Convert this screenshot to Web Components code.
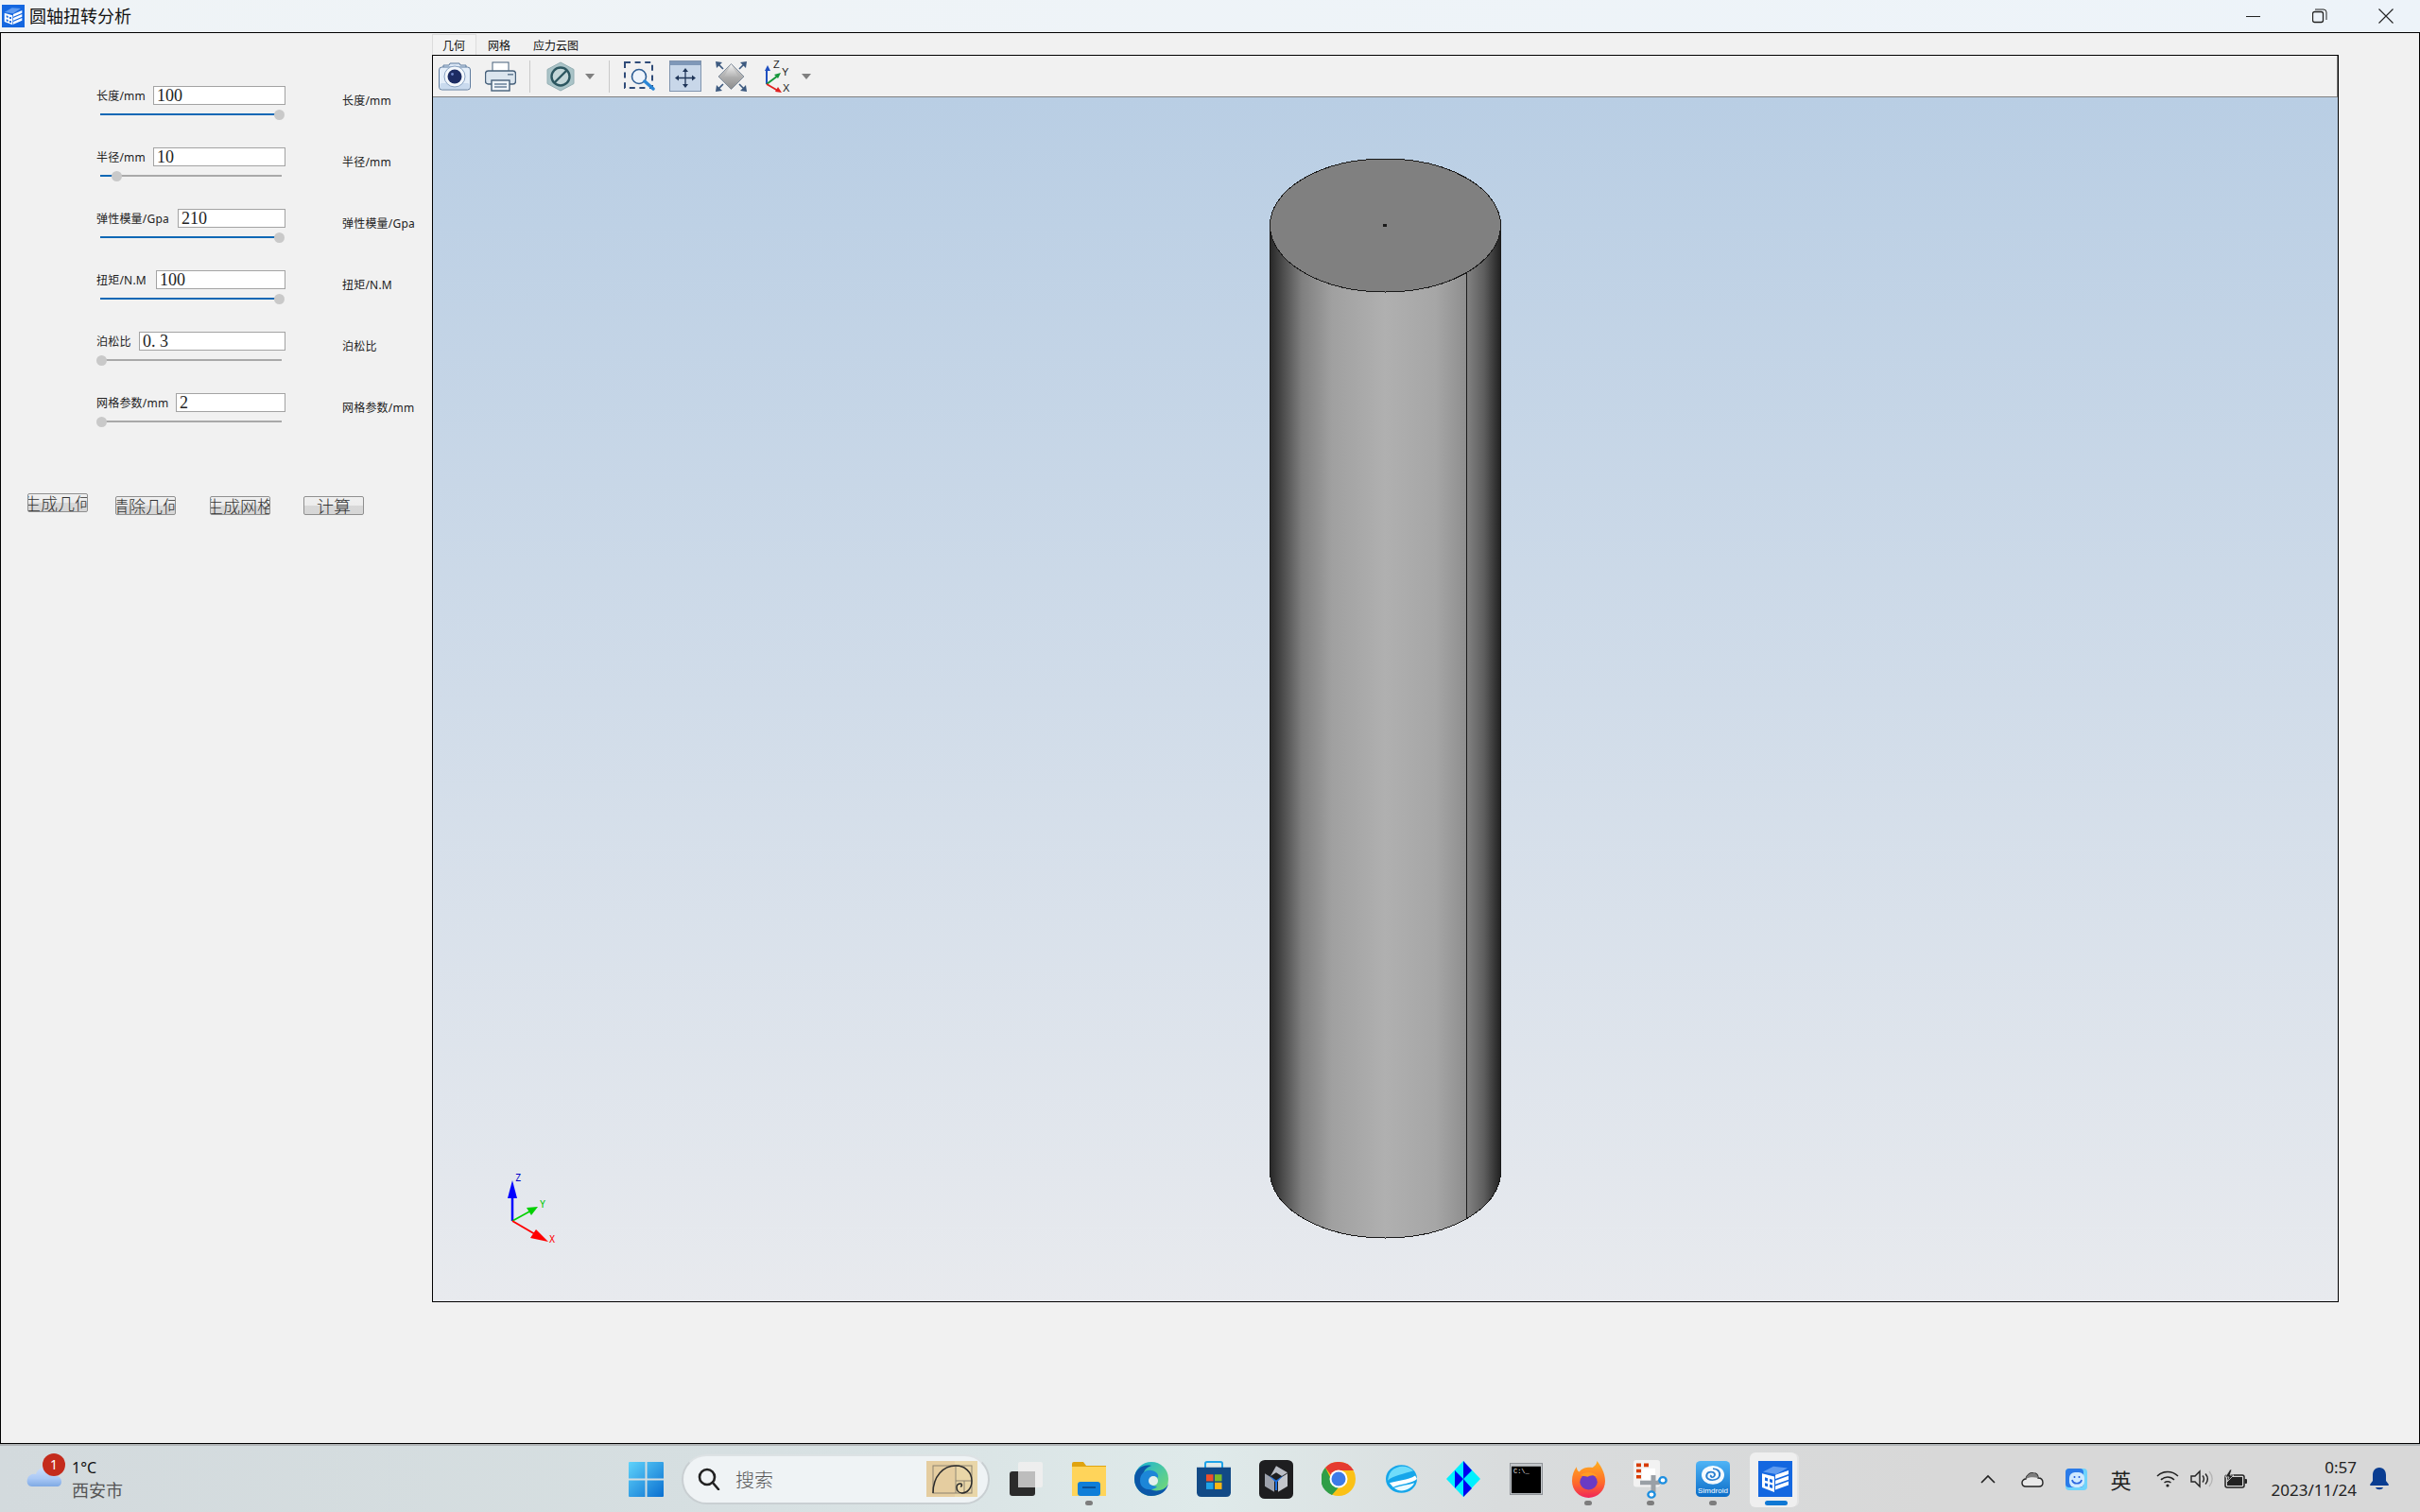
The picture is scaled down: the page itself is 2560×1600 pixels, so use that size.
<!DOCTYPE html>
<html lang="zh">
<head>
<meta charset="utf-8">
<title>圆轴扭转分析</title>
<style>
html,body { margin:0; padding:0; width:2560px; height:1600px; overflow:hidden; }
body { display:flex; flex-direction:column; font-family:"Noto Sans","Noto Sans CJK SC",sans-serif; color:#000; }
svg { display:block; }
</style>
</head>
<body>

<title-bar caption="圆轴扭转分析">
	<svg slot="icon" width="24" height="24" viewBox="0 0 36 36">
		<rect width="36" height="36" fill="#1467e0"/>
		<path d="M4 12 L16 5 L30 6 L18 14 Z" fill="#5f9bf0"/>
		<path d="M4 13 L17 17 L17 32 L4 27 Z" fill="#fff"/>
		<path d="M7 17 L10 18 L10 21 L7 20 Z M12 19 L15 20 L15 23 L12 22 Z M7 23 L10 24 L10 27 L7 26 Z M12 25 L15 26 L15 29 L12 28 Z" fill="#1467e0"/>
		<path d="M18 15 L32 9 L32 13 L18 19 Z M18 21 L32 15 L32 19 L18 25 Z M18 27 L32 21 L32 25 L18 31 Z" fill="#fff"/>
	</svg>
</title-bar>

<main-window>
	<param-form>
		<param-row label="长度/mm" value="100" offset="60" pos="1"></param-row>
		<param-row label="半径/mm" value="10" offset="60" pos="0.09"></param-row>
		<param-row label="弹性模量/Gpa" value="210" offset="86" pos="1"></param-row>
		<param-row label="扭矩/N.M" value="100" offset="63" pos="1"></param-row>
		<param-row label="泊松比" value="0. 3" offset="45" pos="0"></param-row>
		<param-row label="网格参数/mm" value="2" offset="84" pos="0"></param-row>
		<button-row>
			<sim-button>生成几何</sim-button>
			<sim-button lowered>清除几何</sim-button>
			<sim-button lowered>生成网格</sim-button>
			<sim-button lowered>计算</sim-button>
		</button-row>
	</param-form>

	<viewer-panel>
		<tab-strip slot="tabs">
			<tab-item selected>几何</tab-item>
			<tab-item>网格</tab-item>
			<tab-item>应力云图</tab-item>
		</tab-strip>
		<tool-strip slot="tools">
			<tool-button style="margin-left:6px">
				<svg width="34" height="30" viewBox="0 0 34 30">
					<path d="M5 6 L5 3 L11 3 L12 1 L22 1 L23 3 L29 3 L29 6" fill="#dbe7f5" stroke="#5f7c9f"/>
					<rect x="0.5" y="5" width="33" height="24" rx="3" fill="#e4eef9" stroke="#5f7c9f"/>
					<rect x="1.5" y="22" width="31" height="6" rx="2" fill="#c9daee"/>
					<circle cx="17" cy="15" r="11" fill="#f4f8fc" stroke="#8aa3c2"/>
					<circle cx="17" cy="15" r="7.5" fill="#1d2c63"/>
					<circle cx="14.5" cy="12.5" r="1.4" fill="#6f86c8"/>
				</svg>
			</tool-button>
			<tool-button style="margin-left:15px">
				<svg width="33" height="32" viewBox="0 0 33 32">
					<rect x="8" y="1" width="17" height="10" fill="#fff" stroke="#46607a"/>
					<rect x="0.5" y="10" width="32" height="14" rx="3" fill="#dbe5ee" stroke="#46607a" stroke-width="1.4"/>
					<rect x="24" y="13" width="6" height="1.6" fill="#6a8199"/>
					<rect x="7" y="20" width="19" height="11" fill="#eef3f8" stroke="#46607a" stroke-width="1.4"/>
					<path d="M10 24 H23 M10 27 H23" stroke="#6a8199" stroke-width="1.4"/>
				</svg>
			</tool-button>
			<tool-sep style="margin-left:14px"></tool-sep>
			<tool-button style="margin-left:17px">
				<svg width="30" height="32" viewBox="0 0 30 32">
					<path d="M15 1 L29 8.5 L29 23.5 L15 31 L1 23.5 L1 8.5 Z" fill="#aac4c8" stroke="#93aeb3"/>
					<circle cx="15" cy="16" r="9.5" fill="#c3d6d8" stroke="#2c5660" stroke-width="2.4"/>
					<path d="M8.5 22.5 L21.5 9.5" stroke="#2c5660" stroke-width="2.4"/>
				</svg>
			</tool-button>
			<tool-arrow style="margin-left:11px"></tool-arrow>
			<tool-sep style="margin-left:15px"></tool-sep>
			<tool-button style="margin-left:15px">
				<svg width="33" height="31" viewBox="0 0 33 31">
					<rect x="1" y="1" width="29" height="27" fill="none" stroke="#2f4b78" stroke-width="2" stroke-dasharray="6 4.6"/>
					<circle cx="16" cy="16" r="7.5" fill="#eef4fb" stroke="#2f5f96" stroke-width="1.6"/>
					<path d="M22 21 L31 29" stroke="#2a86d6" stroke-width="3.4" stroke-linecap="round"/>
				</svg>
			</tool-button>
			<tool-button style="margin-left:15px">
				<svg width="34" height="33" viewBox="0 0 34 33">
					<rect x="0.5" y="0.5" width="33" height="32" fill="#c8d7e9" stroke="#7f93ad"/>
					<rect x="1" y="1" width="32" height="4" fill="#7f98b8"/>
					<path d="M17 10 V27 M8 18.5 H26" stroke="#1f3558" stroke-width="1.3"/>
					<path d="M17 8 L14 12 H20 Z M17 29 L14 25 H20 Z M6 18.5 L10 15.5 V21.5 Z M28 18.5 L24 15.5 V21.5 Z" fill="#1f3558"/>
				</svg>
			</tool-button>
			<tool-button style="margin-left:15px">
				<svg width="33" height="32" viewBox="0 0 33 32">
					<defs>
						<linearGradient id="fitTop" x1="0" y1="0" x2="0" y2="1"><stop offset="0" stop-color="#f4f4f4"/><stop offset="1" stop-color="#b4b4b4"/></linearGradient>
						<linearGradient id="fitBot" x1="0" y1="0" x2="0" y2="1"><stop offset="0" stop-color="#d4d4d4"/><stop offset="1" stop-color="#8c8c8c"/></linearGradient>
					</defs>
					<path d="M16.5 2.5 L30 16 L16.5 29.5 L3 16 Z" fill="url(#fitBot)" stroke="#6f7f92" stroke-width="0.8"/>
					<path d="M16.5 3 L24 16 L9 16 Z" fill="url(#fitTop)"/>
					<path d="M0 0 L7 1 L1 7 Z M33 0 L26 1 L32 7 Z M0 32 L7 31 L1 25 Z M33 32 L26 31 L32 25 Z" fill="#3d5a80"/>
					<path d="M2 2 L8 8 M31 2 L25 8 M2 30 L8 24 M31 30 L25 24" stroke="#3d5a80" stroke-width="1.6"/>
				</svg>
			</tool-button>
			<tool-button style="margin-left:19px">
				<svg width="30" height="35" viewBox="0 0 30 35" font-family="Liberation Sans" font-size="11">
					<path d="M2 26 V10" stroke="#1f4fc0" stroke-width="2"/><path d="M2 6 L-1 12 H5 Z" fill="#1f4fc0" transform="translate(1 0)"/>
					<path d="M2 26 L14 17" stroke="#14963a" stroke-width="2"/><path d="M17 14 L10 16 L14 20 Z" fill="#14963a"/>
					<path d="M2 26 L14 33" stroke="#e02020" stroke-width="2"/><path d="M18 35 L11 34 L14 29 Z" fill="#e02020"/>
					<text x="9" y="9" fill="#222">Z</text><text x="18" y="17" fill="#222">Y</text><text x="19" y="34" fill="#222">X</text>
				</svg>
			</tool-button>
			<tool-arrow style="margin-left:9px"></tool-arrow>
		</tool-strip>
		<model-view slot="view"></model-view>
	</viewer-panel>
</main-window>

<task-bar>
	<weather-box slot="left">
		<svg width="37" height="24" viewBox="0 0 37 24">
			<defs><linearGradient id="cloudFill" x1="0" y1="0" x2="0" y2="1"><stop offset="0" stop-color="#cfe0fb"/><stop offset="0.6" stop-color="#a9c8f5"/><stop offset="1" stop-color="#7ea9e4"/></linearGradient></defs>
			<path d="M6 23 C1 23 0 18 1 15 C2 11 6 9 10 10 C12 4 18 1 23 2 C29 3 31 8 31 12 C35 12 37 15 37 18 C37 21 35 23 32 23 Z" fill="url(#cloudFill)"/>
		</svg>
		<span slot="badge">1</span>
		<span slot="temp">1°C</span>
		<span slot="city">西安市</span>
	</weather-box>
	<svg slot="start" width="37" height="37" viewBox="0 0 37 37">
		<defs><linearGradient id="winFill" x1="0" y1="0" x2="1" y2="1"><stop offset="0" stop-color="#5fd3fb"/><stop offset="1" stop-color="#0a6fd0"/></linearGradient></defs>
		<path d="M1 0 H17.5 V17.5 H0 V1 A1 1 0 0 1 1 0 Z M19.5 0 H36 A1 1 0 0 1 37 1 V17.5 H19.5 Z M0 19.5 H17.5 V37 H1 A1 1 0 0 1 0 36 Z M19.5 19.5 H37 V36 A1 1 0 0 1 36 37 H19.5 Z" fill="url(#winFill)"/>
	</svg>
	<search-box slot="search">
		<svg slot="picture" width="54" height="38" viewBox="0 0 54 38">
			<rect width="54" height="38" fill="#e9d6a8"/>
			<rect width="30" height="38" fill="#e5cda0"/>
			<rect x="7" y="5" width="41" height="29" fill="none" stroke="#8d8370" stroke-width="1"/>
			<path d="M31 5 V34 M31 21 H48 M40 21 V34" stroke="#8d8370" stroke-width="1" fill="none"/>
			<path d="M7 34 C7 16 18 5 31 5 C41 5 48 12 48 21 C48 29 43 34 38 34 C34 34 32 31 32 28 C32 25 34 24 36 24 C38 24 38 27 36 27" fill="none" stroke="#2b2b2b" stroke-width="1.5"/>
		</svg>
		搜索
	</search-box>
	<task-icon slot="apps">
		<svg width="36" height="36" viewBox="0 0 36 36">
			<rect x="0" y="10" width="27" height="26" rx="3" fill="#2b2b2b"/>
			<rect x="9" y="0" width="26" height="27" rx="2" fill="#efefef" opacity="0.92"/>
			<rect x="9" y="10" width="18" height="17" fill="#bdbdbd"/>
		</svg>
	</task-icon>
	<task-icon slot="apps" running>
		<svg width="36" height="36" viewBox="0 0 36 36">
			<path d="M0 2 Q0 0 2 0 H12 L15 4 H36 V34 H0 Z" fill="#e0a30f"/>
			<rect x="0" y="5" width="36" height="31" fill="#ffd45a"/>
			<rect x="6" y="21" width="24" height="15" rx="3" fill="#0f7ed8"/>
			<rect x="11" y="26" width="14" height="2" fill="#0a4f96"/>
		</svg>
	</task-icon>
	<task-icon slot="apps">
		<svg width="36" height="36" viewBox="0 0 36 36">
			<defs><linearGradient id="edgeA" x1="0" y1="0" x2="1" y2="1"><stop offset="0" stop-color="#18b3d8"/><stop offset="1" stop-color="#7ddc6c"/></linearGradient></defs>
			<circle cx="18" cy="18" r="18" fill="url(#edgeA)"/>
			<path d="M0 18 C0 7 10 2 18 4 C11 6 8 12 9 19 C10 27 19 32 27 30 C32 29 35 26 36 22 C35 31 27 36 18 36 C8 36 0 28 0 18 Z" fill="#0b57a8"/>
			<path d="M6 20 C6 12 12 8 18 9 C24 10 26 14 25 17 C22 14 17 15 16 19 C15 23 19 26 24 26 C21 31 6 31 6 20 Z" fill="#1c86d8"/>
			<circle cx="20" cy="20" r="5" fill="#e3f0ee"/>
		</svg>
	</task-icon>
	<task-icon slot="apps">
		<svg width="36" height="38" viewBox="0 0 36 40" preserveAspectRatio="none">
			<path d="M9 8 V3 Q9 1 11 1 H25 Q27 1 27 3 V8" fill="none" stroke="#1fa3e8" stroke-width="2"/>
			<path d="M0 7 H36 V35 Q36 40 31 40 H5 Q0 40 0 35 Z" fill="#124a86"/>
			<rect x="10" y="15" width="7.5" height="7.5" fill="#f0502a"/><rect x="19" y="15" width="7.5" height="7.5" fill="#7cbb2a"/>
			<rect x="10" y="24" width="7.5" height="7.5" fill="#1fa3e8"/><rect x="19" y="24" width="7.5" height="7.5" fill="#fbb714"/>
		</svg>
	</task-icon>
	<task-icon slot="apps">
		<svg width="36" height="41" viewBox="0 0 36 46" preserveAspectRatio="none">
			<rect width="36" height="46" rx="6" fill="#1e1e20"/>
			<path d="M18 5 L30 13 L24 17 L18 13 L12 17 Z" fill="#b9bcc4" transform="translate(0 2)"/>
			<path d="M6 16 L16 23 L16 38 L6 31 Z" fill="#9ea2ac"/>
			<path d="M30 16 L20 23 L20 38 L30 31 Z" fill="#c3c6cc"/>
			<path d="M10 18 L18 24 L26 18 L19 26 V36 H17 V26 Z" fill="#1d6ee0"/>
		</svg>
	</task-icon>
	<task-icon slot="apps">
		<svg width="36" height="36" viewBox="0 5 36 36">
			<circle cx="18" cy="23" r="18" fill="#fbc116"/>
			<path d="M18 5 A18 18 0 0 1 34 14 L18 14 A9 9 0 0 0 10 19 L4 11 A18 18 0 0 1 18 5 Z" fill="#e53b30"/>
			<path d="M4 11 L12 27 A9 9 0 0 0 18 32 L11 40 A18 18 0 0 1 4 11 Z" fill="#2f9e48"/>
			<circle cx="18" cy="23" r="9.5" fill="#fff"/><circle cx="18" cy="23" r="7.5" fill="#3d7be8"/>
		</svg>
	</task-icon>
	<task-icon slot="apps">
		<svg width="33" height="38" viewBox="0 0 34 44" preserveAspectRatio="none">
			<circle cx="17" cy="22" r="17" fill="#16a6ea"/>
			<path d="M2 24 C8 18 20 16 30 12 C26 7 18 5 12 8 C7 10 4 14 3 19 Z" fill="#6fdcfa"/>
			<path d="M4 27 C12 24 24 24 32 18 L34 22 C28 28 16 28 8 32 Z" fill="#fff"/>
			<path d="M9 33 C16 30 24 30 31 27 C28 35 16 40 9 33 Z" fill="#eafaff"/>
		</svg>
	</task-icon>
	<task-icon slot="apps">
		<svg width="36" height="38" viewBox="0 0 36 46" preserveAspectRatio="none">
			<path d="M18 0 L36 23 L18 46 L0 23 Z" fill="#00f0ff"/>
			<path d="M18 0 L27 12 L18 23 Z M9 12 L18 23 L9 35 Z M18 23 L27 35 L18 46 Z" fill="#0000f0"/>
		</svg>
	</task-icon>
	<task-icon slot="apps">
		<svg width="35" height="34" viewBox="0 0 35 36" preserveAspectRatio="none" font-family="Liberation Mono" font-size="7">
			<rect x="0.5" y="0.5" width="34" height="35" fill="#c4c8cc" stroke="#8d9196"/>
			<rect x="2" y="4" width="31" height="30" fill="#000"/>
			<text x="4" y="12" fill="#eee">C:\_</text>
		</svg>
	</task-icon>
	<task-icon slot="apps" running>
		<svg width="35" height="39" viewBox="0 0 36 44" preserveAspectRatio="none">
			<defs><linearGradient id="foxFill" x1="0" y1="0" x2="0" y2="1"><stop offset="0" stop-color="#ffb020"/><stop offset="0.6" stop-color="#ff6a2a"/><stop offset="1" stop-color="#f0245a"/></linearGradient></defs>
			<path d="M27 0 C31 5 36 14 36 24 C36 35 28 44 18 44 C8 44 0 35 0 24 C0 17 2 11 5 7 C5 10 6 12 8 13 C11 8 18 7 22 8 C26 5 27 3 27 0 Z" fill="url(#foxFill)"/>
			<circle cx="18" cy="25" r="9.5" fill="#6a3bc4"/>
			<path d="M9 17 C14 12 24 12 28 19 C24 16 19 17 17 19 C14 18 11 18 9 17 Z" fill="#ff9c24"/>
		</svg>
	</task-icon>
	<task-icon slot="apps" running>
		<svg width="36" height="41" viewBox="0 0 36 46" preserveAspectRatio="none">
			<rect width="28" height="32" rx="3" fill="#f2f2f2"/>
			<path d="M3 4 H8 V8 H3 Z M11 4 H16 V8 H11 Z M3 11 H8 V15 H3 Z M3 18 H8 V22 H3 Z" fill="#d83b01"/>
			<rect x="9" y="10" width="14" height="14" fill="#fff"/>
			<path d="M7 27 L26 27 L30 23" stroke="#9aa0a6" stroke-width="5" fill="none"/>
			<path d="M21 18 V38" stroke="#9aa0a6" stroke-width="5"/>
			<circle cx="31" cy="24" r="3.6" fill="#fff" stroke="#1e8fe0" stroke-width="2.4"/>
			<circle cx="19" cy="41" r="3.6" fill="#fff" stroke="#1e8fe0" stroke-width="2.4"/>
		</svg>
	</task-icon>
	<task-icon slot="apps" running>
		<svg width="36" height="38" viewBox="0 0 36 46" preserveAspectRatio="none" font-family="Liberation Sans" font-size="8">
			<defs><linearGradient id="simFill" x1="0" y1="0" x2="0" y2="1"><stop offset="0" stop-color="#4fb4f6"/><stop offset="1" stop-color="#0c6dc8"/></linearGradient></defs>
			<rect width="36" height="46" rx="5" fill="url(#simFill)"/>
			<circle cx="18" cy="18" r="12" fill="#fff" opacity="0.95"/>
			<path d="M18 10 C24 10 26 15 25 19 C24 24 17 26 13 23 C10 20 11 14 16 14 C20 14 21 18 19 20 C17 22 15 20 16 18" fill="none" stroke="#2a7fd0" stroke-width="2"/>
			<text x="18" y="41" text-anchor="middle" fill="#fff" textLength="32">Simdroid</text>
		</svg>
	</task-icon>
	<task-icon slot="apps" active>
		<svg width="36" height="38" viewBox="0 0 36 46" preserveAspectRatio="none">
			<rect width="36" height="46" fill="#1467e0"/>
			<path d="M5 14 L16 7 L31 9 L19 17 Z" fill="#5f9bf0"/>
			<path d="M4 16 L17 20 L17 40 L4 34 Z" fill="#fff"/>
			<path d="M7 21 L10 22 L10 26 L7 25 Z M12 23 L15 24 L15 28 L12 27 Z M7 28 L10 29 L10 33 L7 32 Z M12 30 L15 31 L15 35 L12 34 Z" fill="#1467e0"/>
			<path d="M18 18 L32 12 L32 17 L18 23 Z M18 25 L32 19 L32 24 L18 30 Z M18 32 L32 26 L32 31 L18 37 Z" fill="#fff"/>
		</svg>
	</task-icon>
	<sys-tray slot="tray">
		<tray-cell slot="wide"><svg width="16" height="10" viewBox="0 0 16 10"><path d="M1 9 L8 2 L15 9" fill="none" stroke="#222" stroke-width="1.6"/></svg></tray-cell>
		<tray-cell slot="wide"><svg width="24" height="17" viewBox="0 0 24 17"><path d="M5 16 C2 16 1 14 1 12 C1 10 3 8 5 8 C6 4 10 1 13 2 C16 2 18 4 18 7 C21 7 23 9 23 12 C23 15 21 16 19 16 Z" fill="#e9e9e9" stroke="#222" stroke-width="1.4"/><path d="M5 8 C6 4 10 1 13 2 C16 2 18 4 18 7 C14 6 8 6 5 8 Z" fill="#7d7d7d"/></svg></tray-cell>
		<tray-cell slot="wide"><svg width="23" height="23" viewBox="0 0 23 23"><rect width="23" height="23" rx="4" fill="#6fd3fb"/><rect width="19" height="20" rx="4" fill="#2b7be8"/><rect x="4" y="4" width="16" height="16" rx="6" fill="#cfeaff"/><path d="M7 12 C8 17 16 17 17 12" fill="none" stroke="#2b66e0" stroke-width="1.7"/><path d="M9.5 8 V10 M14.5 8 V10" stroke="#2b66e0" stroke-width="1.6"/></svg></tray-cell>
		<tray-cell slot="wide" class="ime">英</tray-cell>
		<tray-cell slot="narrow"><svg width="24" height="18" viewBox="0 0 24 18"><path d="M1 6 C7 0 17 0 23 6 M5 10 C9 6 15 6 19 10 M8.5 13 C10.5 11.5 13.5 11.5 15.5 13" fill="none" stroke="#222" stroke-width="1.5"/><circle cx="12" cy="16" r="1.6" fill="#222"/></svg></tray-cell>
		<tray-cell slot="narrow"><svg width="24" height="20" viewBox="0 0 24 20"><path d="M1 7 H5 L10 2 V18 L5 13 H1 Z" fill="none" stroke="#222" stroke-width="1.4"/><path d="M13 6.5 C15 9 15 11 13 13.5 M16 4.5 C19 8 19 12 16 15.5" fill="none" stroke="#222" stroke-width="1.4"/><path d="M20 2 C24 7 24 13 20 18" fill="none" stroke="#b5b5b5" stroke-width="1.3"/></svg></tray-cell>
		<tray-cell slot="narrow"><svg width="24" height="20" viewBox="0 0 24 20"><rect x="1" y="6" width="20" height="13" rx="2" fill="none" stroke="#222" stroke-width="1.5"/><rect x="3" y="8" width="16" height="9" fill="#222"/><rect x="21.5" y="10" width="2.5" height="5" rx="1" fill="#222"/><path d="M6 0 L1 8 H5 L3 13 L10 6 H6 L8 0 Z" fill="#222" stroke="#d8d8d8" stroke-width="0.8"/></svg></tray-cell>
		<tray-clock slot="clock" time="0:57" date="2023/11/24"></tray-clock>
		<svg slot="bell" width="20" height="24" viewBox="0 0 20 24"><path d="M10 0 C15 0 17 4 17 8 V14 L20 18 Q20 19 19 19 H1 Q0 19 0 18 L3 14 V8 C3 4 5 0 10 0 Z" fill="#0a3d91"/><path d="M6 21 H14 C13 24 7 24 6 21 Z" fill="#0a3d91"/></svg>
	</sys-tray>
</task-bar>

<script>
// window frame ---------------------------------------------------------------
class TitleBar extends HTMLElement {
	constructor() {
		super();
		this.attachShadow({mode:'open'}).innerHTML=`
			<style>
				:host { display:flex; align-items:center; height:34px; flex:none; background:linear-gradient(90deg,#eff3f6,#edf3f9); font-size:18px; color:#111; }
				.icon { margin-left:2px; width:24px; height:24px; }
				.caption { margin-left:5px; line-height:34px; }
				.controls { margin-left:auto; margin-right:1px; display:flex; }
				.controls div { width:70px; height:34px; display:flex; align-items:center; justify-content:center; }
			</style>
			<div class="icon"><slot name="icon"></slot></div>
			<div class="caption">${this.getAttribute('caption')}</div>
			<div class="controls">
				<div><svg width="16" height="16"><path d="M0 8.5 H15" stroke="#222"/></svg></div>
				<div><svg width="16" height="16" fill="none" stroke="#222"><rect x="0.5" y="3.5" width="11" height="11" rx="2" stroke-width="1.3"/><path d="M3 1 H12 Q15 1 15 4 V12"/></svg></div>
				<div><svg width="16" height="16" stroke="#222"><path d="M0.5 0.5 L15.5 15.5 M15.5 0.5 L0.5 15.5" stroke-width="1.1"/></svg></div>
			</div>`;
	}
}
customElements.define("title-bar", TitleBar);

class MainWindow extends HTMLElement {
	constructor() {
		super();
		this.attachShadow({mode:'open'}).innerHTML=`
			<style>
				:host { display:grid; grid-template-columns:456px 2017px 1fr; flex:none; height:1494px; box-sizing:border-box; border:1px solid #000; background:#f1f1f1; padding-top:1px; align-items:start; }
			</style>
			<slot></slot>`;
	}
}
customElements.define("main-window", MainWindow);

// parameter form -------------------------------------------------------------
class ParamForm extends HTMLElement {
	constructor() {
		super();
		this.attachShadow({mode:'open'}).innerHTML=`
			<style>
				:host { display:block; padding:55px 0 0 101px; }
			</style>
			<slot></slot>`;
	}
}
customElements.define("param-form", ParamForm);

class ParamRow extends HTMLElement {
	constructor() {
		super();
		let label=this.getAttribute('label');
		let value=this.getAttribute('value');
		let offset=this.getAttribute('offset');
		let pos=parseFloat(this.getAttribute('pos'));
		// thumb centre runs from 1px to 189px along the 192px track
		let thumb=Math.round(1+pos*188);
		if (pos>0 && pos<1) thumb=17;
		this.attachShadow({mode:'open'}).innerHTML=`
			<style>
				:host { display:grid; grid-template-columns:200px auto; column-gap:60px; height:65px; font-size:12px; letter-spacing:.2px; color:#222; }
				.top { display:grid; grid-template-columns:${offset}px 1fr; align-items:center; height:20px; }
				.field { box-sizing:border-box; height:20px; background:#fff; border:1px solid #a3a3a3; padding-left:3px; font:18px/19px "Liberation Serif",serif; letter-spacing:0; white-space:pre; color:#222; }
				.track { position:relative; height:2px; margin:9px 4px 0 4px; background:#a9a9a9; }
				.fill { height:2px; background:#0f68b5; width:${thumb}px; }
				.thumb { position:absolute; left:${thumb-5}px; top:-4.5px; width:11px; height:11px; border-radius:50%; background:#c9c9c9; }
				.side { padding-top:7px; line-height:17px; }
			</style>
			<div>
				<div class="top"><span>${label}</span><div class="field">${value}</div></div>
				<div class="track"><div class="fill"></div><div class="thumb"></div></div>
			</div>
			<div class="side">${label}</div>`;
	}
}
customElements.define("param-row", ParamRow);

class ButtonRow extends HTMLElement {
	constructor() {
		super();
		this.attachShadow({mode:'open'}).innerHTML=`
			<style>
				:host { display:grid; grid-template-columns:93px 100px 99px 64px; margin:41px 0 0 -73px; align-items:start; }
			</style>
			<slot></slot>`;
	}
}
customElements.define("button-row", ButtonRow);

class SimButton extends HTMLElement {
	constructor() {
		super();
		this.attachShadow({mode:'open'}).innerHTML=`
			<style>
				:host { display:flex; justify-content:center; align-items:center; box-sizing:border-box; width:64px; height:20px; overflow:hidden; white-space:nowrap;
					border:1px solid #8f8f8f; border-radius:2px; background:linear-gradient(#f0f0f0 0,#ececec 50%,#d8d8d8 50%,#d6d6d6 100%);
					font:300 18px/18px "Noto Sans CJK SC",sans-serif; color:#333; }
				:host([lowered]) { margin-top:3px; }
			</style>
			<slot></slot>`;
	}
}
customElements.define("sim-button", SimButton);

// viewer ---------------------------------------------------------------------
class ViewerPanel extends HTMLElement {
	constructor() {
		super();
		this.attachShadow({mode:'open'}).innerHTML=`
			<style>
				:host { display:block; }
				.box { box-sizing:border-box; height:1320px; width:2017px; border:1px solid #000; display:flex; flex-direction:column; }
			</style>
			<slot name="tabs"></slot>
			<div class="box">
				<slot name="tools"></slot>
				<slot name="view"></slot>
			</div>`;
	}
}
customElements.define("viewer-panel", ViewerPanel);

class TabStrip extends HTMLElement {
	constructor() {
		super();
		this.attachShadow({mode:'open'}).innerHTML=`
			<style>:host { display:flex; height:22px; }</style>
			<slot></slot>`;
	}
}
customElements.define("tab-strip", TabStrip);

class TabItem extends HTMLElement {
	constructor() {
		super();
		this.attachShadow({mode:'open'}).innerHTML=`
			<style>
				:host { display:block; padding:0 12px; font-size:12px; line-height:25px; color:#111; }
				:host([selected]) { padding:0 11px 0 10px; margin-right:0; box-sizing:border-box; border:1px solid #dcdcdc; border-bottom:0; background:#f3f3f3; line-height:24px; }
			</style>
			<slot></slot>`;
	}
}
customElements.define("tab-item", TabItem);

class ToolStrip extends HTMLElement {
	constructor() {
		super();
		this.attachShadow({mode:'open'}).innerHTML=`
			<style>
				:host { display:flex; align-items:center; flex:none; box-sizing:border-box; height:44px; background:#f1f1f1; border-bottom:1px solid #808080; border-right:1px solid #808080; }
			</style>
			<slot></slot>`;
	}
}
customElements.define("tool-strip", ToolStrip);

class ToolButton extends HTMLElement {
	constructor() {
		super();
		this.attachShadow({mode:'open'}).innerHTML=`
			<style>:host { display:block; flex:none; }</style>
			<slot></slot>`;
	}
}
customElements.define("tool-button", ToolButton);

class ToolSep extends HTMLElement {
	constructor() {
		super();
		this.attachShadow({mode:'open'}).innerHTML=`
			<style>:host { display:block; flex:none; width:1px; height:34px; background:#c9c9c9; }</style>`;
	}
}
customElements.define("tool-sep", ToolSep);

class ToolArrow extends HTMLElement {
	constructor() {
		super();
		this.attachShadow({mode:'open'}).innerHTML=`
			<style>:host { display:block; flex:none; width:0; height:0; border:5px solid transparent; border-top:6px solid #808080; border-bottom:0; }</style>`;
	}
}
customElements.define("tool-arrow", ToolArrow);

// the 3d view is a free canvas, drawn in page coordinates shifted by the viewport origin
class ModelView extends HTMLElement {
	constructor() {
		super();
		this.attachShadow({mode:'open'}).innerHTML=`
			<style>
				:host { display:block; flex:1; min-height:0; background:linear-gradient(#b9cee4,#e8eaee); overflow:hidden; }
				svg { display:block; }
				text { font:10px "DejaVu Sans Mono",monospace; }
			</style>
			<svg width="2015" height="1274" viewBox="458 103 2015 1274">
				<defs>
					<linearGradient id="side" gradientUnits="userSpaceOnUse" x1="1343" y1="0" x2="1587" y2="0">
						<stop offset="0" stop-color="#262626"/>
						<stop offset="0.05" stop-color="#474747"/>
						<stop offset="0.14" stop-color="#7f7f7f"/>
						<stop offset="0.27" stop-color="#a0a0a0"/>
						<stop offset="0.5" stop-color="#b0b0b0"/>
						<stop offset="0.72" stop-color="#a6a6a6"/>
						<stop offset="0.85" stop-color="#8f8f8f"/>
						<stop offset="0.855" stop-color="#828282"/>
						<stop offset="0.93" stop-color="#5e5e5e"/>
						<stop offset="1" stop-color="#222"/>
					</linearGradient>
				</defs>
				<path d="M1343.5 238.5 V1240 A122 70 0 0 0 1587.5 1240 V238.5 Z" fill="url(#side)" stroke="#1a1a1a" shape-rendering="crispEdges"/>
				<path d="M1551.5 289 V1290" stroke="#1a1a1a" shape-rendering="crispEdges"/>
				<ellipse cx="1465.5" cy="238.5" rx="122" ry="70.5" fill="#808080" stroke="#1a1a1a" shape-rendering="crispEdges"/>
				<rect x="1463" y="237" width="4" height="3" fill="#1a1a1a"/>

				<path d="M542 1292 V1262" stroke="#0000ff" stroke-width="2.5"/>
				<path d="M542 1249 L547 1268 H537 Z" fill="#0000ff"/>
				<path d="M542 1292 L562 1281" stroke="#00d000" stroke-width="1.6"/>
				<path d="M569 1277 L557 1278 L562 1286 Z" fill="#00d000"/>
				<path d="M542 1292 L566 1306" stroke="#ff0000" stroke-width="2"/>
				<path d="M580 1314 L561 1310 L567 1301 Z" fill="#ff0000"/>
				<text x="545" y="1250" fill="#0000c8">Z</text>
				<text x="571" y="1278" fill="#00c800">Y</text>
				<text x="581" y="1315" fill="#ff0000">X</text>
			</svg>`;
	}
}
customElements.define("model-view", ModelView);

// taskbar --------------------------------------------------------------------
class TaskBar extends HTMLElement {
	constructor() {
		super();
		this.attachShadow({mode:'open'}).innerHTML=`
			<style>
				:host { display:flex; align-items:center; flex:none; box-sizing:border-box; height:72px; padding-bottom:0; border-top:2px solid #b0b4b6;
					background:linear-gradient(90deg,#d3dadd 0,#d6dfe1 30%,#dfeaea 50%,#d9dcdd 62%,#d8d8d8 80%); }
				.apps { display:flex; margin-left:6px; }
				::slotted([slot=start]) { margin-right:19px; }
			</style>
			<slot name="left"></slot>
			<slot name="start"></slot>
			<slot name="search"></slot>
			<div class="apps"><slot name="apps"></slot></div>
			<slot name="tray"></slot>`;
	}
}
customElements.define("task-bar", TaskBar);

class WeatherBox extends HTMLElement {
	constructor() {
		super();
		this.attachShadow({mode:'open'}).innerHTML=`
			<style>
				:host { display:flex; align-items:center; box-sizing:border-box; width:665px; padding-left:28px; }
				.icon { position:relative; width:37px; margin:-6px 11px 0 0; }
				.badge { position:absolute; left:17px; top:-12px; width:24px; height:24px; border-radius:50%; background:#c42b1c; color:#fff; font-size:14px; line-height:24px; text-align:center; }
				.temp { font-size:16px; line-height:24px; color:#111; }
				.city { font-size:18px; line-height:24px; color:#555; }
			</style>
			<div class="icon"><slot></slot><div class="badge"><slot name="badge"></slot></div></div>
			<div>
				<div class="temp"><slot name="temp"></slot></div>
				<div class="city"><slot name="city"></slot></div>
			</div>`;
	}
}
customElements.define("weather-box", WeatherBox);

class SearchBox extends HTMLElement {
	constructor() {
		super();
		this.attachShadow({mode:'open'}).innerHTML=`
			<style>
				:host { display:flex; align-items:center; box-sizing:border-box; width:326px; height:53px; border-radius:27px; background:#eff3f5; border:2px solid #c9cfd2; border-top-color:#dde2e4; font-size:20px; color:#555; }
				.lens { margin-left:15px; margin-right:16px; }
				.text { font-family:"Noto Sans CJK SC",sans-serif; font-weight:300; }
				.pic { margin-left:auto; margin-right:11px; }
			</style>
			<svg class="lens" width="24" height="24" viewBox="0 0 24 24" fill="none" stroke="#222" stroke-width="2.6"><circle cx="10" cy="10" r="8"/><path d="M16 16 L22 23" stroke-linecap="round"/></svg>
			<span class="text"><slot></slot></span>
			<div class="pic"><slot name="picture"></slot></div>`;
	}
}
customElements.define("search-box", SearchBox);

class TaskIcon extends HTMLElement {
	constructor() {
		super();
		this.attachShadow({mode:'open'}).innerHTML=`
			<style>
				:host { position:relative; display:flex; align-items:center; justify-content:center; width:66px; height:70px; }
				:host([running]) .dot, :host([active]) .dot { position:absolute; left:29px; top:58px; width:8px; height:5px; border-radius:3px; background:#7d7d7d; }
				:host([active]) .dot { left:22px; width:24px; background:#0f78d4; }
				.bg { display:none; }
				:host([active]) .bg { display:block; position:absolute; left:6px; top:7px; width:50px; height:58px; border-radius:6px; background:#efefef; box-shadow:3px 0 0 -1px #e4e4e4; }
				.in { position:relative; display:flex; }
			</style>
			<div class="bg"></div>
			<div class="in"><slot></slot></div>
			<div class="dot"></div>`;
	}
}
customElements.define("task-icon", TaskIcon);

class SysTray extends HTMLElement {
	constructor() {
		super();
		this.attachShadow({mode:'open'}).innerHTML=`
			<style>
				:host { display:flex; align-items:center; margin-left:auto; padding-right:33px; }
				.wide { display:grid; grid-template-columns:repeat(4,47px); justify-items:center; margin-right:8px; }
				.narrow { display:grid; grid-template-columns:repeat(3,36px); justify-items:center; margin-right:14px; }
				.bell { margin-left:14px; }
			</style>
			<div class="wide"><slot name="wide"></slot></div>
			<div class="narrow"><slot name="narrow"></slot></div>
			<slot name="clock"></slot>
			<div class="bell"><slot name="bell"></slot></div>`;
	}
}
customElements.define("sys-tray", SysTray);

class TrayCell extends HTMLElement {
	constructor() {
		super();
		this.attachShadow({mode:'open'}).innerHTML=`
			<style>
				:host { display:flex; align-items:center; justify-content:center; height:30px; font:22px "Noto Sans CJK SC",sans-serif; color:#222; }
			</style>
			<slot></slot>`;
	}
}
customElements.define("tray-cell", TrayCell);

class TrayClock extends HTMLElement {
	constructor() {
		super();
		this.attachShadow({mode:'open'}).innerHTML=`
			<style>
				:host { display:block; text-align:right; font-size:17px; line-height:24px; color:#222; width:96px; white-space:nowrap; }
			</style>
			<div>${this.getAttribute('time')}</div>
			<div>${this.getAttribute('date')}</div>`;
	}
}
customElements.define("tray-clock", TrayClock);
</script>
</body>
</html>
